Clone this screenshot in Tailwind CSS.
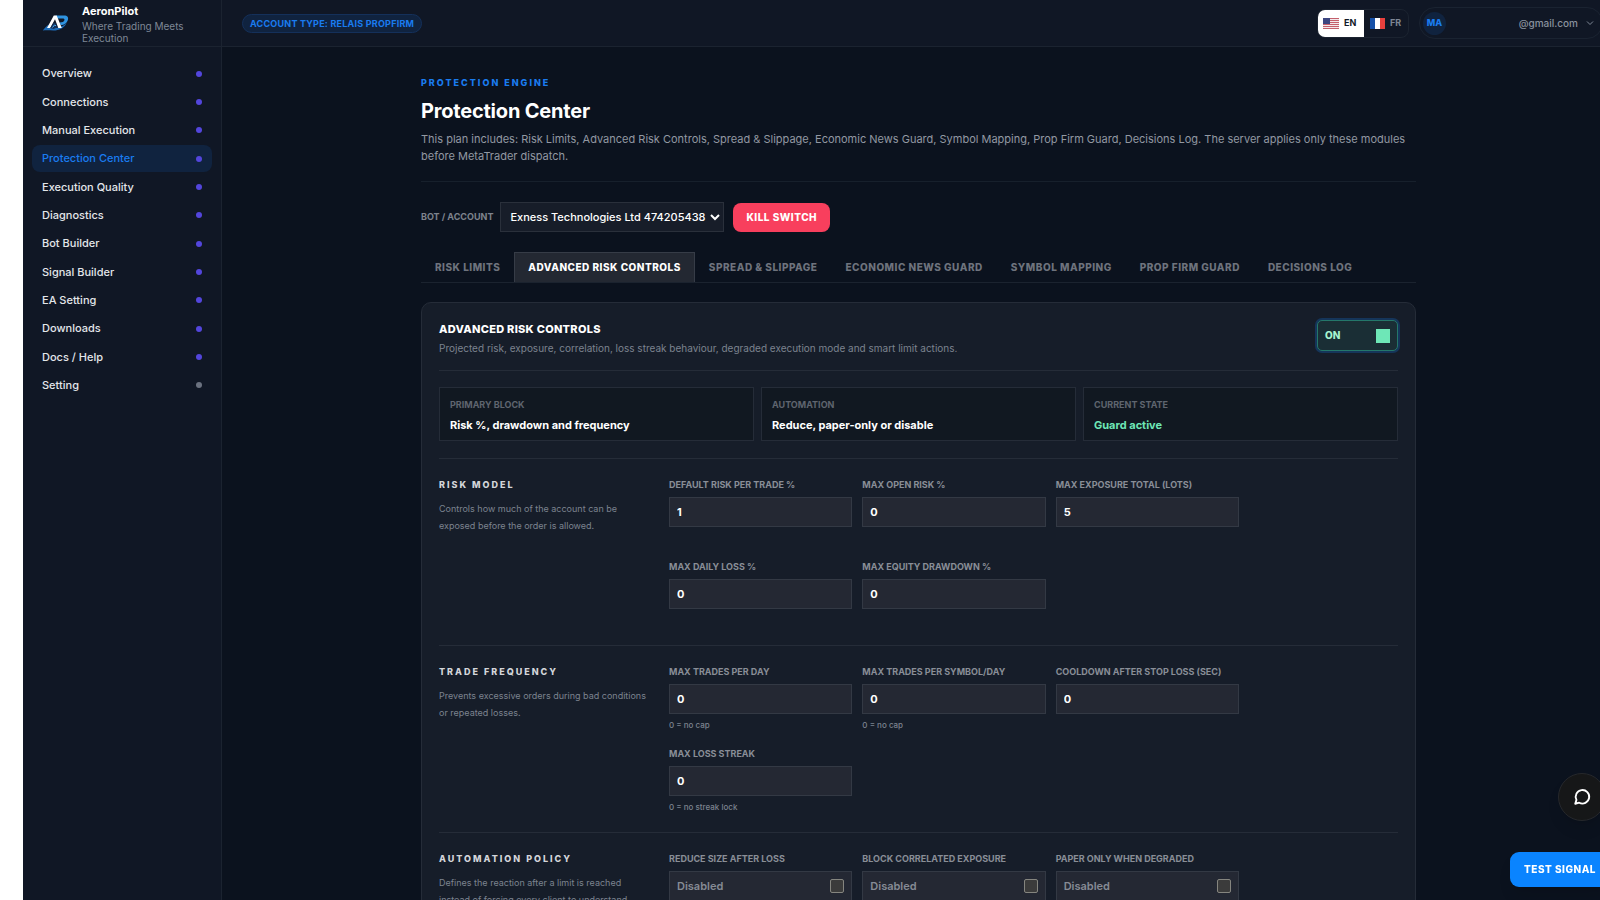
<!DOCTYPE html>
<html lang="en">
<head>
    <meta charset="UTF-8">
    <meta name="viewport" content="width=device-width, initial-scale=1.0">
    <script src="https://cdn.jsdelivr.net/npm/@tailwindcss/browser@4"></script>
    <title>AeronPilot - Protection Center</title>
</head>
<body class="h-screen overflow-hidden bg-white pl-[23px] font-['Inter','Liberation_Sans',sans-serif] text-[11px] text-white">
    <div class="flex h-full w-[calc(100%+15px)] bg-[#0b121e]">

        <aside class="flex w-[199px] shrink-0 flex-col border-r border-[#1b2330] bg-[#101725]">
            <div class="flex h-[47px] items-center gap-3 border-b border-[#1b2330] pl-[19px]">
                <svg class="h-[18px] w-[28px] shrink-0" viewBox="0 0 28 18" fill="none">
                    <path d="M13.500 1.500H22c3.500 0 4.800 2 3.800 4.800-1 3-3.600 4.700-7 4.900l-1.200-2.700c2.800 0 4.300-.6 4.800-2.200.4-1.300-.3-1.900-1.900-1.900h-5.800z" fill="#2f93e0"/>
                    <path d="M.8 16.600C3 13.500 5 11.500 7.500 10.300L6 13.600c3.500.6 8.600.6 12-.6 3-1 5-2.300 6.600-4.200-1.600 4.200-5.600 7-11 7.600-4.200.4-8.400-.6-12.800.2z" fill="#1d6cb8"/>
                    <path d="M5 14 11.800 1.500h2.900L19.800 14h-3.500L13 5.200 8.200 14z" fill="#fff"/>
                    <path d="M8.200 14l3.600-5.500 2.400 1.300.9 3.600-3.600 1.600z" fill="#12305a"/>
                    <path d="M10.500 13.500l2-2.500 1.500.8" stroke="#4aa8f0"/>
                </svg>
                <div class="text-[10px] leading-[12px] text-[#7e8795]">
                    <div class="text-[11px] leading-[18px] font-bold text-white">AeronPilot</div>
                    <div class="w-[110px]">Where Trading Meets Execution</div>
                </div>
            </div>
            <nav class="mt-[13px] flex h-[339px] flex-col justify-between px-[9px] font-medium text-[#e3e6ea]">
                <a href="#" class="flex h-[27px] items-center justify-between rounded-lg px-[10px]">Overview<span class="size-[6px] rounded-full bg-[#5346dc]"></span></a>
                <a href="#" class="flex h-[27px] items-center justify-between rounded-lg px-[10px]">Connections<span class="size-[6px] rounded-full bg-[#5346dc]"></span></a>
                <a href="#" class="flex h-[27px] items-center justify-between rounded-lg px-[10px]">Manual Execution<span class="size-[6px] rounded-full bg-[#5346dc]"></span></a>
                <a href="#" class="flex h-[27px] items-center justify-between rounded-lg bg-[#10233f] px-[10px] text-[#1a7cf0]">Protection Center<span class="size-[6px] rounded-full bg-[#5346dc]"></span></a>
                <a href="#" class="flex h-[27px] items-center justify-between rounded-lg px-[10px]">Execution Quality<span class="size-[6px] rounded-full bg-[#5346dc]"></span></a>
                <a href="#" class="flex h-[27px] items-center justify-between rounded-lg px-[10px]">Diagnostics<span class="size-[6px] rounded-full bg-[#5346dc]"></span></a>
                <a href="#" class="flex h-[27px] items-center justify-between rounded-lg px-[10px]">Bot Builder<span class="size-[6px] rounded-full bg-[#5346dc]"></span></a>
                <a href="#" class="flex h-[27px] items-center justify-between rounded-lg px-[10px]">Signal Builder<span class="size-[6px] rounded-full bg-[#5346dc]"></span></a>
                <a href="#" class="flex h-[27px] items-center justify-between rounded-lg px-[10px]">EA Setting<span class="size-[6px] rounded-full bg-[#5346dc]"></span></a>
                <a href="#" class="flex h-[27px] items-center justify-between rounded-lg px-[10px]">Downloads<span class="size-[6px] rounded-full bg-[#5346dc]"></span></a>
                <a href="#" class="flex h-[27px] items-center justify-between rounded-lg px-[10px]">Docs / Help<span class="size-[6px] rounded-full bg-[#5346dc]"></span></a>
                <a href="#" class="flex h-[27px] items-center justify-between rounded-lg px-[10px]">Setting<span class="size-[6px] rounded-full bg-[#6b7280]"></span></a>
            </nav>
        </aside>

        <div class="flex min-w-0 flex-1 flex-col">
            <header class="flex h-[47px] shrink-0 items-center justify-between border-b border-[#1b2330] bg-[#101725] pr-[12px] pl-[20px]">
                <span class="rounded-full border border-[#14305a] bg-[#10233f] px-[7px] text-[9px] leading-[17px] font-bold tracking-wide text-[#1a7cf0]">ACCOUNT TYPE: RELAIS PROPFIRM</span>
                <div class="flex items-center gap-[10px]">
                    <div class="flex h-[29px] overflow-hidden rounded-lg border border-[#1b2330] text-[9px] font-bold">
                        <button class="flex w-[46px] items-center gap-[5px] bg-white pl-[5px] text-[#111827]">
                            <svg class="h-[11px] w-[16px]" viewBox="0 0 16 11">
                                <path fill="#f3e9ec" d="M0 0h16v11H0z"/>
                                <path stroke="#c4606c" d="M0 .5h16M0 2.500h16M0 4.500h16M0 6.500h16M0 8.500h16M0 10.500h16"/>
                                <path fill="#3c4680" d="M0 0h7v6H0z"/>
                            </svg>
                            EN
                        </button>
                        <button class="flex w-[44px] items-center gap-[5px] pl-[6px] text-[#7e8795]">
                            <svg class="h-[11px] w-[15px]" viewBox="0 0 15 11">
                                <path fill="#1550a8" d="M0 0h5v11H0z"/>
                                <path fill="#fff" d="M5 0h5v11H5z"/>
                                <path fill="#e8403c" d="M10 0h5v11h-5z"/>
                            </svg>
                            FR
                        </button>
                    </div>
                    <button class="flex h-[32px] w-[184px] items-center rounded-full border border-[#1a2331] pr-[8px] pl-[3px]">
                        <span class="flex size-[23px] items-center justify-center rounded-full bg-[#10233f] text-[9px] font-extrabold text-[#1a7cf0]">MA</span>
                        <span class="ml-auto text-[10px] font-medium text-[#8a929e]">@gmail.com</span>
                        <svg class="ml-2 size-[8px] text-[#7e8795]" viewBox="0 0 8 8" fill="none" stroke="currentColor"><path d="M1 2.500l3 3 3-3"/></svg>
                    </button>
                </div>
            </header>

            <main class="flex-1 overflow-y-auto px-[19px] pt-[30px] [scrollbar-width:none]">
                <div class="mx-auto max-w-[995px]">
                    <div class="border-b border-[#17202c] pb-[16px]">
                        <p class="text-[9px] leading-[12px] font-extrabold tracking-[2px] text-[#1a7cf0]">PROTECTION ENGINE</p>
                        <h1 class="mt-[9px] text-[20px] leading-[26px] font-bold tracking-[-0.01em]">Protection Center</h1>
                        <p class="mt-[7px] text-[11px] leading-[17px] text-[#9298a2]">This plan includes: Risk Limits, Advanced Risk Controls, Spread &amp; Slippage, Economic News Guard, Symbol Mapping, Prop Firm Guard, Decisions Log. The server applies only these modules before MetaTrader dispatch.</p>
                    </div>

                    <div class="mt-5 flex items-center">
                        <label for="bot" class="text-[9px] font-bold text-[#7e838d]">BOT / ACCOUNT</label>
                        <select id="bot" class="ml-[7px] h-[30px] w-[224px] border border-[#2a303b] bg-[#171d29] pr-0 pl-[5px] text-[11px] font-medium text-white">
                            <option>Exness Technologies Ltd 474205438</option>
                        </select>
                        <button class="ml-[9px] h-[29px] rounded-lg bg-[#f83f5d] px-[13px] text-[10px] font-extrabold tracking-wider">KILL SWITCH</button>
                    </div>

                    <div class="mt-5 flex border-b border-[#1b232f] text-[10px] text-[#6e737d]">
                        <button class="h-[30px] px-[14px] font-extrabold tracking-wider">RISK LIMITS</button>
                        <button class="h-[30px] border border-b-0 border-[#363c47] bg-[#232832] px-[13px] font-extrabold tracking-wider text-white">ADVANCED RISK CONTROLS</button>
                        <button class="h-[30px] px-[14px] font-extrabold tracking-wider">SPREAD &amp; SLIPPAGE</button>
                        <button class="h-[30px] px-[14px] font-extrabold tracking-wider">ECONOMIC NEWS GUARD</button>
                        <button class="h-[30px] px-[14px] font-extrabold tracking-wider">SYMBOL MAPPING</button>
                        <button class="h-[30px] px-[14px] font-extrabold tracking-wider">PROP FIRM GUARD</button>
                        <button class="h-[30px] px-[14px] font-extrabold tracking-wider">DECISIONS LOG</button>
                    </div>

                    <section class="mt-[19px] rounded-[10px] border border-[#252c38] bg-[#161d29] px-[17px]">
                        <div class="flex items-start justify-between border-b border-[#252c38] pt-[17px] pb-[14px]">
                            <div class="h-[36px]">
                                <h2 class="text-[11px] leading-[18px] font-extrabold tracking-wide">ADVANCED RISK CONTROLS</h2>
                                <p class="mt-[2px] text-[10px] leading-[16px] text-[#7c838f]">Projected risk, exposure, correlation, loss streak behaviour, degraded execution mode and smart limit actions.</p>
                            </div>
                            <button class="flex h-[31px] w-[81px] items-center justify-between rounded-[5px] border border-[#24776a] bg-[#1a2e35] px-[7px] text-[10px] font-extrabold text-[#a7f3d0] ring-2 ring-[#15355a]">
                                ON
                                <span class="size-[14px] bg-[#6ee7b7]"></span>
                            </button>
                        </div>

                        <div class="grid grid-cols-3 gap-[7px] pt-[16px] pb-[17px]">
                            <div class="border border-[#252c38] bg-[#111821] px-[10px] pt-[10px] pb-[7px]">
                                <div class="text-[9px] leading-[14px] font-bold text-[#5f656f]">PRIMARY BLOCK</div>
                                <div class="mt-[5px] text-[11px] leading-[16px] font-bold">Risk %, drawdown and frequency</div>
                            </div>
                            <div class="border border-[#252c38] bg-[#111821] px-[10px] pt-[10px] pb-[7px]">
                                <div class="text-[9px] leading-[14px] font-bold text-[#5f656f]">AUTOMATION</div>
                                <div class="mt-[5px] text-[11px] leading-[16px] font-bold">Reduce, paper-only or disable</div>
                            </div>
                            <div class="border border-[#252c38] bg-[#111821] px-[10px] pt-[10px] pb-[7px]">
                                <div class="text-[9px] leading-[14px] font-bold text-[#5f656f]">CURRENT STATE</div>
                                <div class="mt-[5px] text-[11px] leading-[16px] font-bold text-[#6ee7b7]">Guard active</div>
                            </div>
                        </div>

                        <div class="grid grid-cols-[212px_1fr] gap-[18px] border-t border-[#252c38] pt-[20px] pb-[18px]">
                            <div>
                                <h3 class="text-[9px] leading-[12px] font-extrabold tracking-[2px] text-[#d3d5d9]">RISK MODEL</h3>
                                <p class="mt-[9px] text-[9px] leading-[17px] text-[#7c838f]">Controls how much of the account can be exposed before the order is allowed.</p>
                            </div>
                            <div class="grid max-w-[570px] auto-rows-[66px] grid-cols-3 gap-x-[10px] gap-y-[16px]">
                                <div>
                                    <label for="risk-trade" class="block text-[9px] leading-[12px] font-bold text-[#898e97]">DEFAULT RISK PER TRADE %</label>
                                    <input id="risk-trade" value="1" class="mt-[6px] h-[30px] w-full border border-[#333944] bg-[#242833] px-[7px] text-[11px] font-bold">
                                </div>
                                <div>
                                    <label for="open-risk" class="block text-[9px] leading-[12px] font-bold text-[#898e97]">MAX OPEN RISK %</label>
                                    <input id="open-risk" value="0" class="mt-[6px] h-[30px] w-full border border-[#333944] bg-[#242833] px-[7px] text-[11px] font-bold">
                                </div>
                                <div>
                                    <label for="exposure" class="block text-[9px] leading-[12px] font-bold text-[#898e97]">MAX EXPOSURE TOTAL (LOTS)</label>
                                    <input id="exposure" value="5" class="mt-[6px] h-[30px] w-full border border-[#333944] bg-[#242833] px-[7px] text-[11px] font-bold">
                                </div>
                                <div>
                                    <label for="daily-loss" class="block text-[9px] leading-[12px] font-bold text-[#898e97]">MAX DAILY LOSS %</label>
                                    <input id="daily-loss" value="0" class="mt-[6px] h-[30px] w-full border border-[#333944] bg-[#242833] px-[7px] text-[11px] font-bold">
                                </div>
                                <div>
                                    <label for="drawdown" class="block text-[9px] leading-[12px] font-bold text-[#898e97]">MAX EQUITY DRAWDOWN %</label>
                                    <input id="drawdown" value="0" class="mt-[6px] h-[30px] w-full border border-[#333944] bg-[#242833] px-[7px] text-[11px] font-bold">
                                </div>
                            </div>
                        </div>

                        <div class="grid grid-cols-[212px_1fr] gap-[18px] border-t border-[#252c38] pt-[20px] pb-[18px]">
                            <div>
                                <h3 class="text-[9px] leading-[12px] font-extrabold tracking-[2px] text-[#d3d5d9]">TRADE FREQUENCY</h3>
                                <p class="mt-[9px] text-[9px] leading-[17px] text-[#7c838f]">Prevents excessive orders during bad conditions or repeated losses.</p>
                            </div>
                            <div class="grid max-w-[570px] auto-rows-[66px] grid-cols-3 gap-x-[10px] gap-y-[16px]">
                                <div>
                                    <label for="trades-day" class="block text-[9px] leading-[12px] font-bold text-[#898e97]">MAX TRADES PER DAY</label>
                                    <input id="trades-day" value="0" class="mt-[6px] h-[30px] w-full border border-[#333944] bg-[#242833] px-[7px] text-[11px] font-bold">
                                    <p class="mt-[4px] text-[8px] leading-[14px] font-medium text-[#7c838f]">0 = no cap</p>
                                </div>
                                <div>
                                    <label for="trades-symbol" class="block text-[9px] leading-[12px] font-bold text-[#898e97]">MAX TRADES PER SYMBOL/DAY</label>
                                    <input id="trades-symbol" value="0" class="mt-[6px] h-[30px] w-full border border-[#333944] bg-[#242833] px-[7px] text-[11px] font-bold">
                                    <p class="mt-[4px] text-[8px] leading-[14px] font-medium text-[#7c838f]">0 = no cap</p>
                                </div>
                                <div>
                                    <label for="cooldown" class="block text-[9px] leading-[12px] font-bold text-[#898e97]">COOLDOWN AFTER STOP LOSS (SEC)</label>
                                    <input id="cooldown" value="0" class="mt-[6px] h-[30px] w-full border border-[#333944] bg-[#242833] px-[7px] text-[11px] font-bold">
                                </div>
                                <div>
                                    <label for="streak" class="block text-[9px] leading-[12px] font-bold text-[#898e97]">MAX LOSS STREAK</label>
                                    <input id="streak" value="0" class="mt-[6px] h-[30px] w-full border border-[#333944] bg-[#242833] px-[7px] text-[11px] font-bold">
                                    <p class="mt-[4px] text-[8px] leading-[14px] font-medium text-[#7c838f]">0 = no streak lock</p>
                                </div>
                            </div>
                        </div>

                        <div class="grid grid-cols-[212px_1fr] gap-[18px] border-t border-[#252c38] pt-[20px] pb-[18px]">
                            <div>
                                <h3 class="text-[9px] leading-[12px] font-extrabold tracking-[2px] text-[#d3d5d9]">AUTOMATION POLICY</h3>
                                <p class="mt-[9px] text-[9px] leading-[17px] text-[#7c838f]">Defines the reaction after a limit is reached instead of forcing every client to understand</p>
                            </div>
                            <div class="grid max-w-[570px] auto-rows-[66px] grid-cols-3 gap-x-[10px] gap-y-[16px]">
                                <div>
                                    <div class="text-[9px] leading-[12px] font-bold text-[#898e97]">REDUCE SIZE AFTER LOSS</div>
                                    <label class="mt-[6px] flex h-[30px] items-center justify-between border border-[#333944] bg-[#242833] px-[7px] text-[11px] font-semibold text-[#868b95]">Disabled
                                        <input type="checkbox" class="size-[14px] appearance-none rounded-[2px] border border-[#85857f] bg-[#3b3b3b]">
                                    </label>
                                </div>
                                <div>
                                    <div class="text-[9px] leading-[12px] font-bold text-[#898e97]">BLOCK CORRELATED EXPOSURE</div>
                                    <label class="mt-[6px] flex h-[30px] items-center justify-between border border-[#333944] bg-[#242833] px-[7px] text-[11px] font-semibold text-[#868b95]">Disabled
                                        <input type="checkbox" class="size-[14px] appearance-none rounded-[2px] border border-[#85857f] bg-[#3b3b3b]">
                                    </label>
                                </div>
                                <div>
                                    <div class="text-[9px] leading-[12px] font-bold text-[#898e97]">PAPER ONLY WHEN DEGRADED</div>
                                    <label class="mt-[6px] flex h-[30px] items-center justify-between border border-[#333944] bg-[#242833] px-[7px] text-[11px] font-semibold text-[#868b95]">Disabled
                                        <input type="checkbox" class="size-[14px] appearance-none rounded-[2px] border border-[#85857f] bg-[#3b3b3b]">
                                    </label>
                                </div>
                            </div>
                        </div>
                    </section>
                </div>
            </main>
        </div>
    </div>

    <!-- floating actions -->
    <button aria-label="Chat" class="fixed -right-[6px] bottom-[79px] flex size-[48px] items-center justify-center rounded-full border border-[#26282c] bg-[#161718] shadow-lg">
        <svg class="size-[18px]" viewBox="0 0 24 24" fill="none" stroke="#fff" stroke-width="2.500" stroke-linejoin="round"><path d="M3 21l1.600-5.200A9 9 0 1 1 8.300 19.600z"/></svg>
    </button>
    <button class="fixed -right-[10px] bottom-[13px] h-[35px] rounded-[9px] bg-[#0a84ff] px-[14px] text-[10px] font-extrabold tracking-wider shadow-lg">TEST SIGNAL</button>
</body>
</html>
